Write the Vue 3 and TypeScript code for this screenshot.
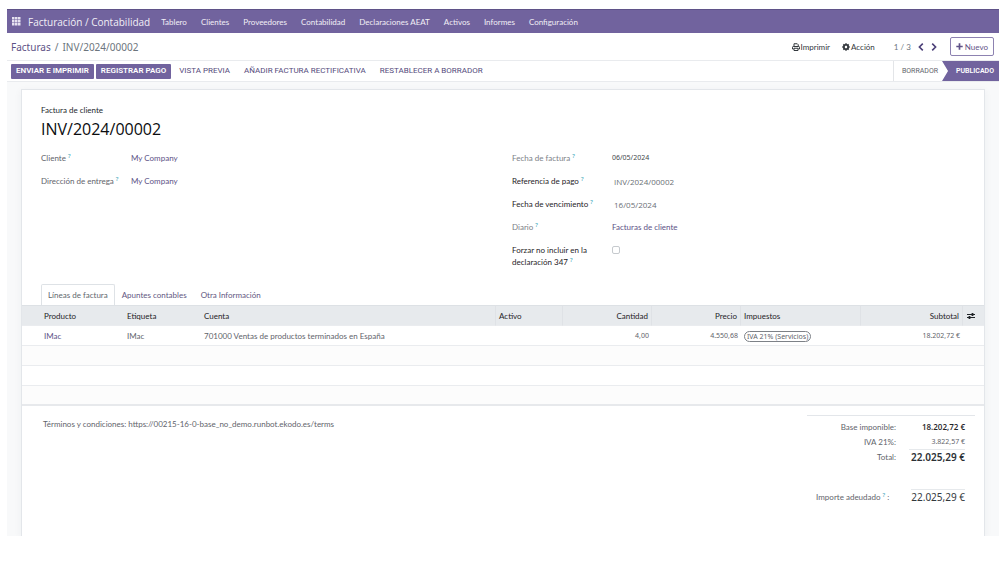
<script setup lang="ts">
import { ref } from 'vue'

const menus = ['Tablero', 'Clientes', 'Proveedores', 'Contabilidad', 'Declaraciones AEAT', 'Activos', 'Informes', 'Configuración']
const tabs = ['Líneas de factura', 'Apuntes contables', 'Otra Información']
const activeTab = ref(0)
const paymentRef = ref('INV/2024/00002')
const dueDate = ref('16/05/2024')
const exclude347 = ref(false)
const cells = [0, 3, 6]
</script>

<template>
  <div class="client">
    <header class="navbar">
      <button class="apps" type="button" aria-label="Aplicaciones">
        <svg viewBox="0 0 9 9" width="9" height="9" fill="currentColor">
          <template v-for="y in cells" :key="y">
            <rect v-for="x in cells" :key="x" :x="x" :y="y" width="2.5" height="2.5" />
          </template>
        </svg>
      </button>
      <a class="brand" href="#">Facturación / Contabilidad</a>
      <nav class="menus">
        <a v-for="m in menus" :key="m" href="#">{{ m }}</a>
      </nav>
    </header>

    <div class="control">
      <div class="crumbs"><a href="#">Facturas</a><span>/</span><span>INV/2024/00002</span></div>
      <div class="tools">
        <button type="button" class="tool">
          <svg viewBox="0 0 16 16" width="8" height="8" fill="none" stroke="currentColor" stroke-width="2">
            <path d="M4 7V1.500h6.500L12.500 3.500V7" />
            <path d="M3.500 12H1V8.500Q1 7 2.500 7h11Q15 7 15 8.500V12h-2.500" />
            <path d="M4 10.500h8V15H4z" />
          </svg>
          Imprimir
        </button>
        <button type="button" class="tool action">
          <svg viewBox="0 0 16 16" width="8" height="8">
            <circle cx="8" cy="8" r="4.200" fill="none" stroke="currentColor" stroke-width="3.600" />
            <g stroke="currentColor" stroke-width="3">
              <path d="M8 0.500v3M8 12.500v3M0.500 8h3M12.500 8h3M2.700 2.700l2 2M11.300 11.300l2 2M2.700 13.300l2-2M11.300 4.700l2-2" />
            </g>
            <circle cx="8" cy="8" r="2.400" fill="#fff" />
          </svg>
          Acción
        </button>
        <div class="pager">
          <span>1 / 3</span>
          <button type="button" aria-label="Anterior">
            <svg viewBox="0 0 6 8" width="6" height="8" fill="none" stroke="currentColor" stroke-width="1.600"><path d="M4.800 0.600L1.400 4l3.400 3.400" /></svg>
          </button>
          <button type="button" aria-label="Siguiente">
            <svg viewBox="0 0 6 8" width="6" height="8" fill="none" stroke="currentColor" stroke-width="1.600"><path d="M1.200 0.600L4.600 4 1.200 7.400" /></svg>
          </button>
        </div>
        <button type="button" class="new">
          <svg viewBox="0 0 7 7" width="7" height="7" stroke="currentColor" stroke-width="1.700"><path d="M3.500 0.300v6.400M0.300 3.500h6.400" /></svg>
          Nuevo
        </button>
      </div>
    </div>

    <div class="statusbar">
      <div class="actions">
        <button type="button" class="primary">ENVIAR E IMPRIMIR</button>
        <button type="button" class="primary">REGISTRAR PAGO</button>
        <button type="button" class="link">VISTA PREVIA</button>
        <button type="button" class="link">AÑADIR FACTURA RECTIFICATIVA</button>
        <button type="button" class="link">RESTABLECER A BORRADOR</button>
      </div>
      <div class="stages">
        <button type="button" class="stage">BORRADOR</button>
        <button type="button" class="stage current" aria-current="step">PUBLICADO</button>
      </div>
    </div>

    <main class="view">
      <div class="sheet">
        <section class="form">
          <div class="kind">Factura de cliente</div>
          <h1>INV/2024/00002</h1>
          <div class="groups">
            <div class="group left">
              <div class="field"><span class="lbl">Cliente <sup>?</sup></span><a href="#">My Company</a></div>
              <div class="field"><span class="lbl">Dirección de entrega <sup>?</sup></span><a href="#">My Company</a></div>
            </div>
            <div class="group right">
              <div class="field"><span class="lbl light">Fecha de factura <sup>?</sup></span><span class="date">06/05/2024</span></div>
              <div class="field"><label class="lbl edit" for="payref">Referencia de pago <sup>?</sup></label><input id="payref" v-model="paymentRef" type="text"></div>
              <div class="field"><label class="lbl edit" for="due">Fecha de vencimiento <sup>?</sup></label><input id="due" v-model="dueDate" type="text"></div>
              <div class="field"><span class="lbl light">Diario <sup>?</sup></span><a href="#">Facturas de cliente</a></div>
              <div class="field"><label class="lbl edit" for="ex347">Forzar no incluir en la declaración 347 <sup>?</sup></label><input id="ex347" v-model="exclude347" type="checkbox"></div>
            </div>
          </div>
        </section>

        <div class="tabs" role="tablist">
          <button v-for="(t, i) in tabs" :key="t" type="button" role="tab" :aria-selected="activeTab === i" :class="{ on: activeTab === i }" @click="activeTab = i">{{ t }}</button>
        </div>

        <table>
          <colgroup>
            <col class="c-prod"><col class="c-tag"><col class="c-acc"><col class="c-asset"><col class="c-num"><col class="c-num"><col class="c-tax"><col class="c-sub"><col class="c-opt">
          </colgroup>
          <thead>
            <tr>
              <th>Producto</th><th>Etiqueta</th><th>Cuenta</th><th>Activo</th><th class="num">Cantidad</th><th class="num">Precio</th><th>Impuestos</th><th class="num">Subtotal</th>
              <th class="opt">
                <button type="button" aria-label="Columnas opcionales">
                  <svg viewBox="0 0 8 8" width="8" height="8" stroke="currentColor" stroke-width="1"><path d="M0 2.500h8M0 5.500h8" /><path d="M5.500 1v3M2.500 4v3" stroke-width="1.800" /></svg>
                </button>
              </th>
            </tr>
          </thead>
          <tbody>
            <tr>
              <td><a href="#">IMac</a></td><td>IMac</td><td>701000 Ventas de productos terminados en España</td><td></td><td class="num">4,00</td><td class="num">4.550,68</td><td><span class="tag">IVA 21% (Servicios)</span></td><td class="num">18.202,72 €</td><td></td>
            </tr>
            <tr v-for="n in 3" :key="n"><td colspan="9"></td></tr>
          </tbody>
        </table>

        <section class="footer">
          <p class="terms">Términos y condiciones: https://00215-16-0-base_no_demo.runbot.ekodo.es/terms</p>
          <dl class="totals">
            <div><dt>Base imponible:</dt><dd class="base">18.202,72 €</dd></div>
            <div><dt>IVA 21%:</dt><dd>3.822,57 €</dd></div>
            <div><dt>Total:</dt><dd class="total">22.025,29 €</dd></div>
            <div class="due"><dt>Importe adeudado <sup>?</sup> :</dt><dd class="residual">22.025,29 €</dd></div>
          </dl>
        </section>
      </div>
    </main>
  </div>
</template>

<style>
body { background: #fff; }
</style>

<style scoped>
* { box-sizing: border-box; }
.client {
  --wide: "Open Sans", "Noto Sans", sans-serif;
  --compact: "Noto Sans", "Open Sans", sans-serif;
  margin: 9px 2px 25px 7px;
  font-family: Lato, "Segoe UI", sans-serif;
  font-size: 8px;
  line-height: 12px;
  color: #5f646b;
}
a { color: #5d5286; text-decoration: none; }
button { font: inherit; color: inherit; background: none; border: 0; padding: 0; white-space: nowrap; cursor: pointer; }
svg { display: block; flex: none; }
sup { font-family: var(--compact); font-size: 6px; line-height: 0; color: #1f9bb3; vertical-align: 3px; }

.navbar { display: flex; align-items: center; height: 24px; padding-left: 5px; background: #71639e; border-top: 1px solid #5f5288; }
.navbar a { color: #f1eff6; white-space: nowrap; }
.apps { color: #e6e2f0; }
.navbar .brand { margin-left: 7px; font-family: var(--wide); font-size: 10px; }
.menus { display: flex; gap: 14px; margin-left: 11px; }

.control { display: flex; align-items: center; justify-content: space-between; height: 28px; padding: 0 5px 0 4px; border-bottom: 1px solid #e9ebee; }
.crumbs { display: flex; gap: 4px; font-family: var(--compact); font-size: 10px; color: #6c757d; }
.tools { display: flex; align-items: center; color: #33383d; }
.tool { display: flex; align-items: center; gap: 1px; }
.action { margin-left: 12px; }
.pager { display: flex; align-items: center; gap: 7px; margin: 0 13px 0 19px; color: #6c757d; }
.pager button { color: #4b3f78; }
.new { display: flex; align-items: center; gap: 2px; height: 19px; padding: 0 5px; border: 1px solid #8d82b1; border-radius: 2px; color: #5f5288; }

.statusbar { display: flex; justify-content: space-between; height: 21px; padding-left: 4px; border-bottom: 1px solid #e9ebee; font-family: Roboto, sans-serif; }
.actions { display: flex; align-items: center; gap: 2px; }
.primary { height: 15px; padding: 0 5px; border-radius: 1px; background: #71639e; color: #fff; font-weight: 600; }
.link { padding: 0 6px; color: #554b7c; }
.stages { display: flex; border-left: 1px solid #e3e5e8; font-size: 7px; }
.stage { padding: 0 4px 0 8px; }
.stage.current { padding: 0 5px 0 14px; background: #71639e; color: #fff; font-weight: 600; clip-path: polygon(0 0, 100% 0, 100% 100%, 0 100%, 6px 50%); }

.view { background: #f8f9fa; padding: 7px 14px 0; }
.sheet { background: #fff; border: 1px solid #e3e6ea; border-bottom: 0; box-shadow: 0 2px 8px rgba(40, 50, 70, 0.05); clip-path: inset(-8px -14px 0 -14px); }
.form { padding: 14px 19px 0; }
.kind { color: #25292d; }
h1 { margin: 3px 0 13px; font-family: var(--wide); font-size: 16px; line-height: 20px; font-weight: 400; color: #0b0d0f; }
.groups { display: grid; grid-template-columns: 1fr 1fr; gap: 18px; }
.group { display: grid; align-content: start; gap: 11px; }
.field { display: grid; grid-template-columns: 90px 1fr; }
.right .field { grid-template-columns: 100px 1fr; }
.light { color: #7c8187; }
.date { font-family: var(--compact); font-size: 7px; color: #43484d; }
.edit { color: #1f2327; }
.field input[type="text"] { font-family: var(--wide); font-size: 8px; color: #6a6f75; height: 12px; border: 0; padding: 0 2px; background: none; }
.field input[type="checkbox"] { appearance: none; width: 8px; height: 8px; margin: 2px 0; border: 1px solid #c6cace; border-radius: 2px; }

.tabs { display: flex; margin-top: 16px; padding-left: 19px; }
.tabs button { height: 21px; padding: 0 6px; border: 1px solid transparent; border-bottom: 0; color: #5f577f; }
.tabs .on { border-color: #dee2e6; border-radius: 2px 2px 0 0; color: #62676d; }

table { width: 100%; table-layout: fixed; border-collapse: separate; border-spacing: 0; }
.c-prod { width: 102px; }
.c-tag { width: 77px; }
.c-asset { width: 67px; }
.c-num { width: 89px; }
.c-tax { width: 120px; }
.c-sub { width: 102px; }
.c-opt { width: 21px; }
th, td { padding: 0 3px; height: 20px; text-align: left; font-weight: 400; white-space: nowrap; border-bottom: 1px solid #eaecef; }
th { height: 21px; background: #e7eaed; color: #1f2327; border-top: 1px solid #dde1e5; border-right: 1px solid #dfe2e6; }
td.num, .tag { font-family: var(--compact); font-size: 7px; }
th:first-child, td:first-child { padding-left: 22px; }
th:nth-child(1), th:nth-child(2), th:last-child { border-right: 0; }
.num { text-align: right; }
.opt { padding: 0 4px; }
.opt button { display: block; }
tbody tr:nth-child(even) { background: #fcfcfc; }
tbody tr:last-child td { border-bottom: 2px solid #e7e9ec; }
.tag { display: inline-block; height: 11px; line-height: 9px; padding: 0 2px; border: 1px solid #7d8187; border-radius: 6px; }

.footer { display: flex; justify-content: space-between; align-items: flex-start; height: 130px; padding: 9px 9px 0 21px; }
p, dl, dd { margin: 0; }
.terms { padding-top: 3px; }
.totals { width: 168px; padding-right: 10px; border-top: 1px solid #e3e6ea; padding-top: 3px; }
.totals div { display: flex; justify-content: flex-end; align-items: center; height: 15px; }
.totals dt { margin-right: 13px; }
.totals dd { min-width: 56px; text-align: right; font-family: var(--compact); font-size: 7px; }
.totals .base { font-family: var(--wide); font-size: 8px; color: #1f2327; font-weight: 600; }
.totals .total, .totals .residual { border-top: 1px solid #e6e9ec; font-size: 10px; line-height: 14px; }
.totals .total { font-weight: 600; color: #2c3035; }
.totals .due { margin-top: 25px; }
.totals .due dt { margin-right: 22px; }
.totals .residual { min-width: 53px; color: #33383d; }
</style>
